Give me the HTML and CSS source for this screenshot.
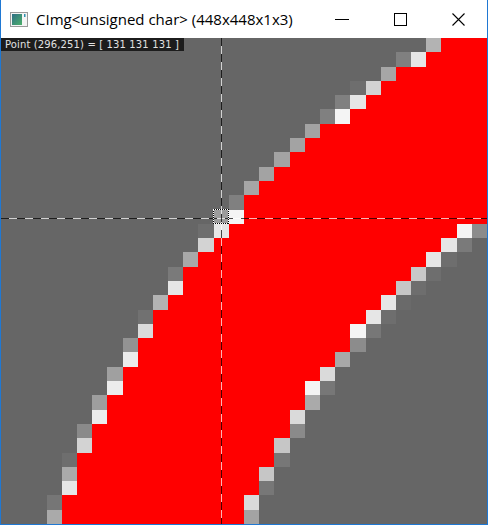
FILE: index.html
```html
<!DOCTYPE html>
<html>
<head>
<meta charset="utf-8">
<title>CImg display</title>
<link rel="stylesheet" href="styles.css">
</head>
<body>
<div class="window">
  <div class="titlebar">
    <svg class="app-icon" width="18" height="15" viewBox="0 0 18 15">
      <defs>
        <linearGradient id="ig" x1="0" y1="0" x2="1" y2="1">
          <stop offset="0" stop-color="#2f6f86"/>
          <stop offset="1" stop-color="#4caf6a"/>
        </linearGradient>
      </defs>
      <rect x="0.5" y="0.5" width="17" height="14" fill="#f4f4f4" stroke="#9a9a9a"/>
      <rect x="2" y="2" width="10" height="11" fill="url(#ig)"/>
      <rect x="14" y="2" width="1.5" height="3" fill="#2f8fb0"/>
    </svg>
    <span class="title">CImg&lt;unsigned char&gt; (448x448x1x3)</span>
    <div class="controls">
      <div class="ctl">
        <svg width="14" height="14" viewBox="0 0 14 14"><line x1="0" y1="7.5" x2="14" y2="7.5" stroke="#000" stroke-width="1"/></svg>
      </div>
      <div class="ctl">
        <svg width="13" height="13" viewBox="0 0 13 13"><rect x="0.5" y="0.5" width="12" height="12" fill="none" stroke="#000" stroke-width="1"/></svg>
      </div>
      <div class="ctl">
        <svg width="13" height="13" viewBox="0 0 13 13"><path d="M0.5 0.5 L12.5 12.5 M12.5 0.5 L0.5 12.5" stroke="#000" stroke-width="1.1" fill="none"/></svg>
      </div>
    </div>
  </div>
  <div class="viewport">
    <svg class="picture" width="486" height="486" viewBox="0 0 486 486" shape-rendering="crispEdges">
      <rect x="0" y="0" width="486" height="486" fill="#666666"/>
      <g transform="scale(15.1875 14.2941176)">
        <!-- r0 -->
        <rect x="28" y="0" width="1" height="1" fill="#b3b3b3"/><rect x="29" y="0" width="3" height="1" fill="#ff0000"/>
        <!-- r1 -->
        <rect x="26" y="1" width="1" height="1" fill="#808080"/><rect x="27" y="1" width="1" height="1" fill="#e6e6e6"/><rect x="28" y="1" width="4" height="1" fill="#ff0000"/>
        <!-- r2 -->
        <rect x="25" y="2" width="1" height="1" fill="#a6a6a6"/><rect x="26" y="2" width="6" height="1" fill="#ff0000"/>
        <!-- r3 -->
        <rect x="23" y="3" width="1" height="1" fill="#6e6e6e"/><rect x="24" y="3" width="1" height="1" fill="#d3d3d3"/><rect x="25" y="3" width="7" height="1" fill="#ff0000"/>
        <!-- r4 -->
        <rect x="22" y="4" width="1" height="1" fill="#808080"/><rect x="23" y="4" width="1" height="1" fill="#e6e6e6"/><rect x="24" y="4" width="8" height="1" fill="#ff0000"/>
        <!-- r5 -->
        <rect x="21" y="5" width="1" height="1" fill="#808080"/><rect x="22" y="5" width="1" height="1" fill="#f4f4f4"/><rect x="23" y="5" width="9" height="1" fill="#ff0000"/>
        <!-- r6 -->
        <rect x="20" y="6" width="1" height="1" fill="#a3a3a3"/><rect x="21" y="6" width="11" height="1" fill="#ff0000"/>
        <!-- r7 -->
        <rect x="19" y="7" width="1" height="1" fill="#a3a3a3"/><rect x="20" y="7" width="12" height="1" fill="#ff0000"/>
        <!-- r8 -->
        <rect x="18" y="8" width="1" height="1" fill="#a3a3a3"/><rect x="19" y="8" width="13" height="1" fill="#ff0000"/>
        <!-- r9 -->
        <rect x="17" y="9" width="1" height="1" fill="#a3a3a3"/><rect x="18" y="9" width="14" height="1" fill="#ff0000"/>
        <!-- r10 -->
        <rect x="16" y="10" width="1" height="1" fill="#a6a6a6"/><rect x="17" y="10" width="15" height="1" fill="#ff0000"/>
        <!-- r11 -->
        <rect x="15" y="11" width="1" height="1" fill="#808080"/><rect x="16" y="11" width="16" height="1" fill="#ff0000"/>
        <!-- r12 -->
        <rect x="14" y="12" width="1" height="1" fill="#9c9c9c"/><rect x="15" y="12" width="1" height="1" fill="#f4f4f4"/><rect x="16" y="12" width="16" height="1" fill="#ff0000"/>
        <!-- r13 -->
        <rect x="13" y="13" width="1" height="1" fill="#6e6e6e"/><rect x="14" y="13" width="1" height="1" fill="#e6e6e6"/><rect x="15" y="13" width="15" height="1" fill="#ff0000"/><rect x="30" y="13" width="1" height="1" fill="#f4f4f4"/><rect x="31" y="13" width="1" height="1" fill="#8c8c8c"/>
        <!-- r14 -->
        <rect x="13" y="14" width="1" height="1" fill="#d3d3d3"/><rect x="14" y="14" width="15" height="1" fill="#ff0000"/><rect x="29" y="14" width="1" height="1" fill="#e6e6e6"/><rect x="30" y="14" width="1" height="1" fill="#7a7a7a"/>
        <!-- r15 -->
        <rect x="12" y="15" width="1" height="1" fill="#a8a8a8"/><rect x="13" y="15" width="15" height="1" fill="#ff0000"/><rect x="28" y="15" width="1" height="1" fill="#e6e6e6"/><rect x="29" y="15" width="1" height="1" fill="#6e6e6e"/>
        <!-- r16 -->
        <rect x="11" y="16" width="1" height="1" fill="#7a7a7a"/><rect x="12" y="16" width="15" height="1" fill="#ff0000"/><rect x="27" y="16" width="1" height="1" fill="#c8c8c8"/><rect x="28" y="16" width="1" height="1" fill="#6e6e6e"/>
        <!-- r17 -->
        <rect x="11" y="17" width="1" height="1" fill="#e6e6e6"/><rect x="12" y="17" width="14" height="1" fill="#ff0000"/><rect x="26" y="17" width="1" height="1" fill="#c6c6c6"/><rect x="27" y="17" width="1" height="1" fill="#6e6e6e"/>
        <!-- r18 -->
        <rect x="10" y="18" width="1" height="1" fill="#b3b3b3"/><rect x="11" y="18" width="14" height="1" fill="#ff0000"/><rect x="25" y="18" width="1" height="1" fill="#e6e6e6"/><rect x="26" y="18" width="1" height="1" fill="#6a6a6a"/>
        <!-- r19 -->
        <rect x="9" y="19" width="1" height="1" fill="#717171"/><rect x="10" y="19" width="14" height="1" fill="#ff0000"/><rect x="24" y="19" width="1" height="1" fill="#e6e6e6"/><rect x="25" y="19" width="1" height="1" fill="#6e6e6e"/>
        <!-- r20 -->
        <rect x="9" y="20" width="1" height="1" fill="#dadada"/><rect x="10" y="20" width="13" height="1" fill="#ff0000"/><rect x="23" y="20" width="1" height="1" fill="#f4f4f4"/><rect x="24" y="20" width="1" height="1" fill="#777777"/>
        <!-- r21 -->
        <rect x="8" y="21" width="1" height="1" fill="#939393"/><rect x="9" y="21" width="14" height="1" fill="#ff0000"/><rect x="23" y="21" width="1" height="1" fill="#8c8c8c"/>
        <!-- r22 -->
        <rect x="8" y="22" width="1" height="1" fill="#ececec"/><rect x="9" y="22" width="13" height="1" fill="#ff0000"/><rect x="22" y="22" width="1" height="1" fill="#a8a8a8"/>
        <!-- r23 -->
        <rect x="7" y="23" width="1" height="1" fill="#a0a0a0"/><rect x="8" y="23" width="13" height="1" fill="#ff0000"/><rect x="21" y="23" width="1" height="1" fill="#dadada"/>
        <!-- r24 -->
        <rect x="7" y="24" width="1" height="1" fill="#ececec"/><rect x="8" y="24" width="12" height="1" fill="#ff0000"/><rect x="20" y="24" width="1" height="1" fill="#f4f4f4"/><rect x="21" y="24" width="1" height="1" fill="#777777"/>
        <!-- r25 -->
        <rect x="6" y="25" width="1" height="1" fill="#9e9e9e"/><rect x="7" y="25" width="13" height="1" fill="#ff0000"/><rect x="20" y="25" width="1" height="1" fill="#aaaaaa"/>
        <!-- r26 -->
        <rect x="6" y="26" width="1" height="1" fill="#ececec"/><rect x="7" y="26" width="12" height="1" fill="#ff0000"/><rect x="19" y="26" width="1" height="1" fill="#dadada"/>
        <!-- r27 -->
        <rect x="5" y="27" width="1" height="1" fill="#8a8a8a"/><rect x="6" y="27" width="13" height="1" fill="#ff0000"/><rect x="19" y="27" width="1" height="1" fill="#8a8a8a"/>
        <!-- r28 -->
        <rect x="5" y="28" width="1" height="1" fill="#d3d3d3"/><rect x="6" y="28" width="12" height="1" fill="#ff0000"/><rect x="18" y="28" width="1" height="1" fill="#c6c6c6"/>
        <!-- r29 -->
        <rect x="4" y="29" width="1" height="1" fill="#6e6e6e"/><rect x="5" y="29" width="13" height="1" fill="#ff0000"/><rect x="18" y="29" width="1" height="1" fill="#777777"/>
        <!-- r30 -->
        <rect x="4" y="30" width="1" height="1" fill="#aaaaaa"/><rect x="5" y="30" width="12" height="1" fill="#ff0000"/><rect x="17" y="30" width="1" height="1" fill="#c6c6c6"/>
        <!-- r31 -->
        <rect x="4" y="31" width="1" height="1" fill="#e6e6e6"/><rect x="5" y="31" width="12" height="1" fill="#ff0000"/><rect x="17" y="31" width="1" height="1" fill="#777777"/>
        <!-- r32 -->
        <rect x="3" y="32" width="1" height="1" fill="#767676"/><rect x="4" y="32" width="12" height="1" fill="#ff0000"/><rect x="16" y="32" width="1" height="1" fill="#dadada"/>
        <!-- r33 -->
        <rect x="3" y="33" width="1" height="1" fill="#aaaaaa"/><rect x="4" y="33" width="12" height="1" fill="#ff0000"/><rect x="16" y="33" width="1" height="1" fill="#a3a3a3"/>
      </g>
      <!-- crosshair -->
      <line x1="0" y1="180.5" x2="486" y2="180.5" stroke="rgba(0,0,0,0.7)" stroke-dasharray="8 8"/>
      <line x1="0" y1="180.5" x2="486" y2="180.5" stroke="rgba(255,255,255,0.7)" stroke-dasharray="8 8" stroke-dashoffset="8"/>
      <line x1="220.5" y1="0" x2="220.5" y2="486" stroke="rgba(0,0,0,0.7)" stroke-dasharray="8 8"/>
      <line x1="220.5" y1="0" x2="220.5" y2="486" stroke="rgba(255,255,255,0.7)" stroke-dasharray="8 8" stroke-dashoffset="8"/>
      <!-- cursor box -->
      <rect x="212.5" y="171.5" width="15" height="14" fill="none" stroke="#ffffff" stroke-width="1"/>
      <rect x="212.5" y="171.5" width="15" height="14" fill="none" stroke="#000000" stroke-width="1" stroke-dasharray="1 1"/>
    </svg>
    <div class="point-label">Point (296,251) = [ 131 131 131 ]</div>
  </div>
</div>
</body>
</html>
```

FILE: styles.css
```css
html, body {
  margin: 0;
  padding: 0;
  background: #ffffff;
}

.window {
  width: 488px;
  height: 525px;
  box-sizing: border-box;
  border: 1px solid #1f78d3;
  border-top: none;
  background: #ffffff;
  display: flex;
  flex-direction: column;
}

.titlebar {
  height: 38px;
  flex: 0 0 38px;
  display: flex;
  align-items: center;
  background: #ffffff;
}

.app-icon {
  margin-left: 9px;
  flex: 0 0 auto;
}

.title {
  margin-left: 8px;
  font-family: "Open Sans", "Noto Sans", sans-serif;
  font-size: 15px;
  color: #000000;
  white-space: nowrap;
}

.controls {
  margin-left: auto;
  display: flex;
  height: 100%;
}

.ctl {
  width: 58px;
  height: 100%;
  display: flex;
  align-items: center;
  justify-content: center;
}

.viewport {
  position: relative;
  width: 486px;
  height: 486px;
  overflow: hidden;
}

.picture {
  display: block;
}

.point-label {
  position: absolute;
  left: 0;
  top: 0;
  height: 13px;
  padding: 0 5px 0 4px;
  background: #1c1c1c;
  color: #e2e2e2;
  font-family: "DejaVu Sans", sans-serif;
  font-size: 10px;
  letter-spacing: 0.13px;
  line-height: 13px;
  white-space: nowrap;
}
```
